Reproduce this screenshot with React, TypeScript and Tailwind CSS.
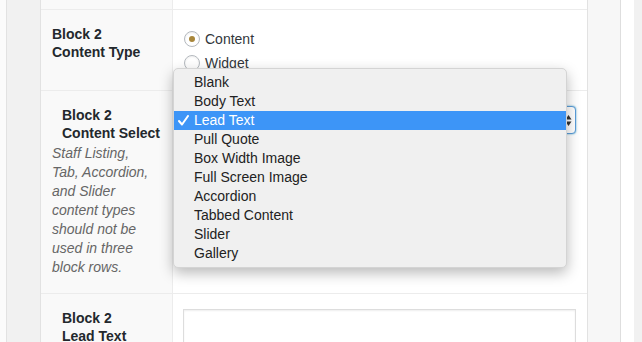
import React from 'react';

const OPTIONS = [
  'Blank',
  'Body Text',
  'Lead Text',
  'Pull Quote',
  'Box Width Image',
  'Full Screen Image',
  'Accordion',
  'Tabbed Content',
  'Slider',
  'Gallery'
];

const SELECTED = 'Lead Text';

const Radio = ({ checked, label }: { checked?: boolean; label: string }) => (
  <div className="flex h-[24px] items-center gap-[5px]">
    <span className="flex h-[16px] w-[16px] items-center justify-center rounded-full border border-[#b4b9be] bg-white shadow-[inset_0_1px_2px_rgba(0,0,0,0.07)]">
      {checked && <span className="h-[6px] w-[6px] rounded-full bg-[#a8863a]" />}
    </span>
    <span className="text-[14px] text-[#32373c]">{label}</span>
  </div>
);

const Label = ({ children, pl }: { children: React.ReactNode; pl: string }) => (
  <div className={`${pl} text-[14px] font-bold leading-[18px] text-[#23282d]`}>{children}</div>
);

export default function App() {
  return (
    <div className="relative flex h-[342px] w-[642px] overflow-hidden bg-[#f1f1f1] font-['Liberation_Sans',Arial,sans-serif]">
      <div className="w-[7px] shrink-0 border-r border-[#e2e2e2] bg-[#fbfbfb]" />
      <div className="w-[34px] shrink-0 border-r border-[#e2e2e2] bg-[#f1f1f1]" />

      {/* form table */}
      <div className="flex w-[547px] shrink-0 flex-col border-r border-[#e2e2e2] bg-white">
        <div className="flex h-[10px] shrink-0 border-b border-[#ececec]">
          <div className="w-[132px] shrink-0 border-r border-[#ececec] bg-[#f9f9f9]" />
          <div className="flex-1" />
        </div>

        {/* Content Type */}
        <div className="flex h-[81px] shrink-0 border-b border-[#ececec]">
          <div className="w-[132px] shrink-0 border-r border-[#ececec] bg-[#f9f9f9] pt-[15px]">
            <Label pl="pl-[11px]">
              Block 2
              <br />
              Content Type
            </Label>
          </div>
          <div className="flex-1 pl-[11px] pt-[17px]">
            <Radio checked label="Content" />
            <Radio label="Widget" />
          </div>
        </div>

        {/* Content Select */}
        <div className="flex h-[203px] shrink-0 border-b border-[#ececec]">
          <div className="w-[132px] shrink-0 border-r border-[#ececec] bg-[#f9f9f9] pt-[15px]">
            <Label pl="pl-[21px]">
              Block 2
              <br />
              Content Select
            </Label>
            <p className="mt-[2px] w-[118px] pl-[11px] text-[14px] italic leading-[19px] text-[#666666]">
              Staff Listing, Tab, Accordion, and Slider content types should not be used in three block rows.
            </p>
          </div>
          <div className="flex-1 pl-[10px] pt-[15px]">
            {/* select box, mostly hidden behind its open menu */}
            <div className="relative h-[28px] w-[393px] rounded-[4px] border border-[#5b9dd9] bg-white shadow-[0_0_2px_rgba(30,140,190,0.8)]">
              <svg className="absolute right-[3px] top-[7px]" width="7" height="13" viewBox="0 0 7 13">
                <path d="M0.5 5.5 L3.5 1 L6.5 5.5 Z" fill="#333" />
                <path d="M0.5 7.5 L3.5 12 L6.5 7.5 Z" fill="#333" />
              </svg>
            </div>
          </div>
        </div>

        {/* Lead Text */}
        <div className="flex flex-1">
          <div className="w-[132px] shrink-0 border-r border-[#ececec] bg-[#f9f9f9] pt-[15px]">
            <Label pl="pl-[21px]">
              Block 2
              <br />
              Lead Text
            </Label>
          </div>
          <div className="flex-1 pl-[10px] pt-[15px]">
            <div className="h-[80px] w-[393px] border border-[#dddddd] bg-white shadow-[inset_0_1px_2px_rgba(0,0,0,0.07)]" />
          </div>
        </div>
      </div>

      <div className="w-[33px] shrink-0 border-r border-[#dedede] bg-[#f7f7f7]" />
      <div className="w-[13px] shrink-0 bg-white" />

      {/* open select menu */}
      <div className="absolute left-[173px] top-[68px] w-[394px] rounded-[5px] border border-[#d4d4d4] bg-[#f0f0f0] py-[4px] shadow-[0_5px_14px_rgba(0,0,0,0.28)]">
        {OPTIONS.map((o) => {
          const active = o === SELECTED;
          return (
            <div
              key={o}
              className={`relative h-[19px] pl-[20px] text-[14px] leading-[19px] ${
                active ? 'bg-[#3d95f7] text-white' : 'text-[#222222]'
              }`}
            >
              {active && (
                <svg className="absolute left-[4px] top-[4px]" width="11" height="11" viewBox="0 0 11 11">
                  <path d="M1 6 L4 9.5 L10 1" fill="none" stroke="white" strokeWidth="2" strokeLinecap="round" strokeLinejoin="round" />
                </svg>
              )}
              {o}
            </div>
          );
        })}
      </div>
    </div>
  );
}
